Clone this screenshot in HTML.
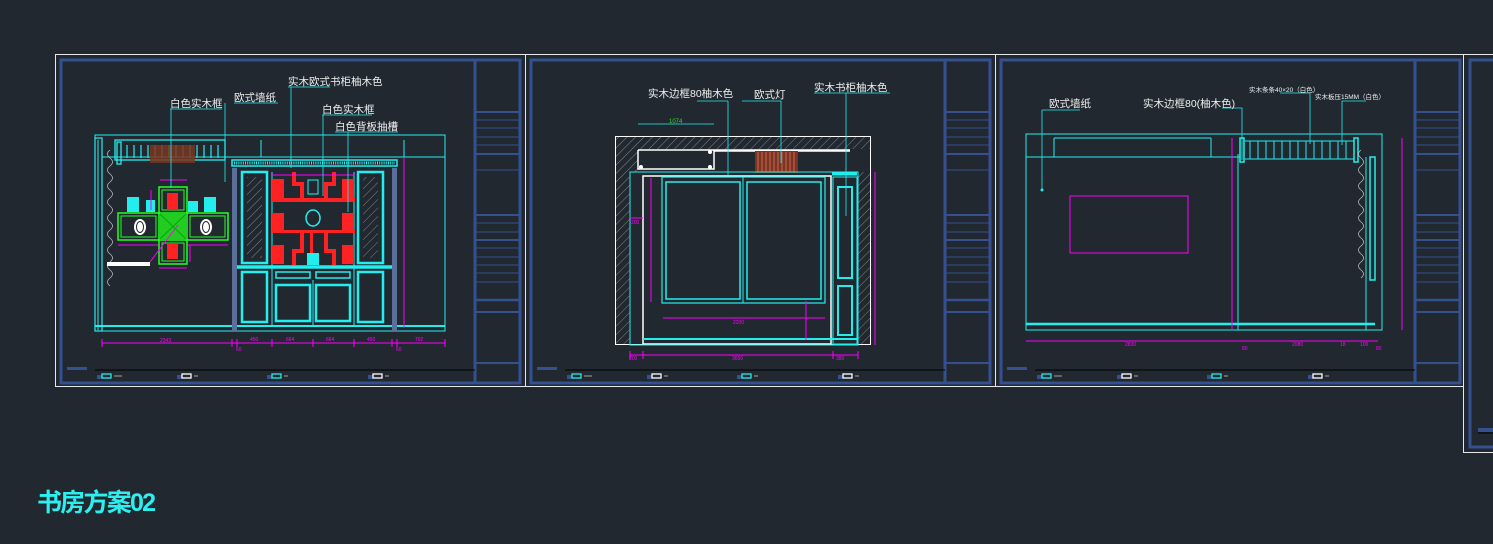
<!DOCTYPE html>
<html><head><meta charset="utf-8"><style>
html,body{margin:0;padding:0;background:#212830;width:1493px;height:544px;overflow:hidden}
svg{display:block}
text{font-family:"Liberation Sans","Noto Sans CJK SC",sans-serif}
</style></head><body>
<svg width="1493" height="544" viewBox="0 0 1493 544" xmlns="http://www.w3.org/2000/svg">
<defs>
<pattern id="hatch" width="6" height="6" patternUnits="userSpaceOnUse" patternTransform="rotate(45)">
<line x1="0" y1="0" x2="0" y2="6" stroke="#9a9a9a" stroke-width="0.8"/></pattern>
<g id="frame">
 <rect x="6" y="6" width="459" height="323" fill="none" stroke="#34508f" stroke-width="3"/>
 <line x1="420" y1="6" x2="420" y2="329" stroke="#34508f" stroke-width="3"/>
 <g stroke="#34508f">
  <line x1="420" y1="58" x2="465" y2="58" stroke-width="2"/>
  <line x1="420" y1="66" x2="465" y2="66"/><line x1="420" y1="74" x2="465" y2="74"/>
  <line x1="420" y1="83" x2="465" y2="83"/><line x1="420" y1="91" x2="465" y2="91"/>
  <line x1="420" y1="100" x2="465" y2="100" stroke-width="2"/>
  <line x1="420" y1="116" x2="465" y2="116"/>
  <line x1="420" y1="161" x2="465" y2="161" stroke-width="2"/>
  <line x1="420" y1="169" x2="465" y2="169"/><line x1="420" y1="178" x2="465" y2="178"/>
  <line x1="420" y1="186" x2="465" y2="186" stroke-width="2"/>
  <line x1="420" y1="194" x2="465" y2="194"/><line x1="420" y1="203" x2="465" y2="203"/>
  <line x1="420" y1="211" x2="465" y2="211"/><line x1="420" y1="219" x2="465" y2="219"/>
  <line x1="420" y1="228" x2="465" y2="228"/>
  <line x1="420" y1="246" x2="465" y2="246" stroke-width="2.5"/>
  <line x1="420" y1="258" x2="465" y2="258" stroke-width="2"/>
  <line x1="420" y1="309" x2="465" y2="309" stroke-width="2"/>
 </g>
 <line x1="40" y1="316" x2="420" y2="316" stroke="#000" stroke-width="1"/>
 <rect x="12" y="313" width="20" height="3" fill="#34508f"/>
 <g>
  <rect x="42" y="321" width="5" height="4" fill="#34508f"/><rect x="47" y="320" width="9" height="4" fill="none" stroke="#2ee" stroke-width="1.3"/><rect x="59" y="321" width="8" height="2" fill="#666"/>
  <rect x="122" y="321" width="5" height="4" fill="#34508f"/><rect x="127" y="320" width="9" height="4" fill="none" stroke="#fff" stroke-width="1.3"/><rect x="139" y="321" width="4" height="2" fill="#666"/>
  <rect x="212" y="321" width="5" height="4" fill="#34508f"/><rect x="217" y="320" width="9" height="4" fill="none" stroke="#2ee" stroke-width="1.3"/><rect x="229" y="321" width="4" height="2" fill="#666"/>
  <rect x="313" y="321" width="5" height="4" fill="#34508f"/><rect x="318" y="320" width="9" height="4" fill="none" stroke="#fff" stroke-width="1.3"/><rect x="330" y="321" width="4" height="2" fill="#666"/>
 </g>
</g>
</defs>

<rect x="55.5" y="54.5" width="470" height="332" fill="none" stroke="#e8e8e8" stroke-width="1"/>
<rect x="525.5" y="54.5" width="470" height="332" fill="none" stroke="#e8e8e8" stroke-width="1"/>
<rect x="995.5" y="54.5" width="468" height="332" fill="none" stroke="#e8e8e8" stroke-width="1"/>
<rect x="1463.5" y="54.5" width="40" height="398" fill="none" stroke="#e8e8e8" stroke-width="1"/>
<use href="#frame" x="55" y="54"/>
<use href="#frame" x="525" y="54"/>
<use href="#frame" x="995" y="54"/>
<rect x="1470" y="60" width="40" height="387" fill="none" stroke="#34508f" stroke-width="3"/>
<rect x="1478" y="428" width="20" height="4" fill="#34508f"/>
<line x1="1478" y1="433" x2="1493" y2="433" stroke="#000"/>

<!-- PANEL 1 -->
<g fill="none" stroke="#2ee" stroke-width="1">
 <rect x="95" y="135" width="350" height="196"/>
 <line x1="102" y1="157" x2="445" y2="157"/>
 <line x1="95" y1="326" x2="445" y2="326" stroke-width="2"/>
 <rect x="95" y="138" width="7" height="193" stroke-width="1.2"/>
 <line x1="98" y1="140" x2="98" y2="330"/>
 <rect x="115" y="140" width="110" height="20" stroke-width="1.3"/>
 <rect x="117" y="142" width="4" height="22" stroke-width="1.3"/>
 <path d="M261 140 V157 H267 M404 140 V157 H410"/>
</g>
<g stroke="#2ee" stroke-width="1.2">
 <line x1="127" y1="145" x2="127" y2="158"/><line x1="134" y1="145" x2="134" y2="158"/><line x1="141" y1="145" x2="141" y2="158"/>
 <line x1="148" y1="145" x2="148" y2="158"/><line x1="155" y1="145" x2="155" y2="158"/><line x1="162" y1="145" x2="162" y2="158"/>
 <line x1="169" y1="145" x2="169" y2="158"/><line x1="176" y1="145" x2="176" y2="158"/><line x1="183" y1="145" x2="183" y2="158"/>
 <line x1="190" y1="145" x2="190" y2="158"/><line x1="197" y1="145" x2="197" y2="158"/><line x1="204" y1="145" x2="204" y2="158"/>
 <line x1="211" y1="145" x2="211" y2="158"/><line x1="218" y1="145" x2="218" y2="158"/>
</g>
<rect x="150" y="145" width="45" height="18" fill="#7a3520" opacity="0.85"/>
<path d="M110 150 q-5 4 0 8 q5 4 0 8 q-5 4 0 8 q5 4 0 8 q-5 4 0 8 q5 4 0 8 q-5 4 0 8 q5 4 0 8 q-5 4 0 8 q5 4 0 8 q-5 4 0 8 q5 4 0 8 q-5 4 0 8 q5 4 0 8 q-5 4 0 8 q5 4 0 8 q-5 4 0 8" fill="none" stroke="#bbb" stroke-width="0.8"/>
<g fill="none" stroke="#2f2" stroke-width="1.5">
 <rect x="159" y="187" width="28" height="26"/><rect x="159" y="240" width="28" height="24"/>
 <rect x="118" y="213" width="41" height="27"/><rect x="187" y="213" width="41" height="27"/>
 <rect x="162" y="190" width="22" height="20" stroke-width="1"/><rect x="162" y="243" width="22" height="18" stroke-width="1"/>
 <rect x="121" y="216" width="35" height="21" stroke-width="1"/><rect x="190" y="216" width="35" height="21" stroke-width="1"/>
</g>
<rect x="160" y="214" width="26" height="25" fill="#2c2"/>
<path d="M160 214 L186 239 M186 214 L160 239" stroke="#0a0" stroke-width="1"/>
<rect x="167" y="193" width="11" height="16" fill="#f22"/><rect x="167" y="243" width="11" height="16" fill="#f22"/>
<ellipse cx="140" cy="227" rx="6" ry="8" fill="#fff"/><ellipse cx="140" cy="227" rx="3.5" ry="5.5" fill="none" stroke="#222"/>
<ellipse cx="206" cy="227" rx="6" ry="8" fill="#fff"/><ellipse cx="206" cy="227" rx="3.5" ry="5.5" fill="none" stroke="#222"/>
<g fill="#2ee"><rect x="127" y="197" width="12" height="15"/><rect x="146" y="200" width="9" height="12"/><rect x="188" y="201" width="10" height="11"/><rect x="204" y="197" width="12" height="15"/></g>
<rect x="107" y="262" width="43" height="4" fill="#fff"/>
<g stroke="#f0f" stroke-width="1" fill="none">
 <line x1="160" y1="180" x2="187" y2="180"/><line x1="118" y1="245" x2="158" y2="245"/><line x1="188" y1="245" x2="228" y2="245"/>
 <line x1="159" y1="268" x2="187" y2="268"/><line x1="151" y1="190" x2="151" y2="210"/><line x1="190" y1="245" x2="190" y2="262"/>
 <line x1="150" y1="262" x2="178" y2="225"/>
</g>
<g fill="none" stroke="#2ee">
 <rect x="232" y="160" width="165" height="6" stroke-width="1.5"/>
 <line x1="234" y1="163" x2="395" y2="163" stroke="#2ee" stroke-width="3" stroke-dasharray="1 1.2"/>
 <rect x="242" y="172" width="25" height="91" stroke-width="2.5"/>
 <rect x="358" y="172" width="25" height="91" stroke-width="2.5"/>
 <line x1="237" y1="267" x2="393" y2="267" stroke-width="3.5"/>
 <rect x="242" y="272" width="25" height="50" stroke-width="2.5"/>
 <rect x="358" y="272" width="25" height="50" stroke-width="2.5"/>
 <rect x="276" y="272" width="34" height="6" stroke-width="1.5"/><rect x="316" y="272" width="34" height="6" stroke-width="1.5"/>
 <rect x="276" y="285" width="34" height="36" stroke-width="2.5"/><rect x="316" y="285" width="34" height="36" stroke-width="2.5"/>
 <line x1="237" y1="326" x2="393" y2="326" stroke-width="2"/>
 <line x1="272" y1="172" x2="272" y2="325"/><line x1="354" y1="172" x2="354" y2="325"/><line x1="313" y1="280" x2="313" y2="325"/>
</g>
<rect x="247" y="177" width="15" height="81" fill="url(#hatch)"/>
<rect x="363" y="177" width="15" height="81" fill="url(#hatch)"/>
<rect x="232" y="168" width="5" height="163" fill="#5a6f99"/><rect x="392" y="168" width="5" height="163" fill="#5a6f99"/>
<g fill="#f22">
 <rect x="272" y="179" width="12" height="19"/><rect x="342" y="179" width="12" height="19"/>
 <rect x="272" y="213" width="12" height="19"/><rect x="342" y="213" width="12" height="19"/>
 <rect x="272" y="245" width="12" height="19"/><rect x="342" y="245" width="12" height="19"/>
 <rect x="272" y="198" width="83" height="4"/><rect x="272" y="230" width="83" height="3"/>
 <path d="M292 172 h4 v10 h8 v16 h-4 v-12 h-8z M332 172 h4 v14 h-8 v12 h-4 v-16 h8z"/>
 <path d="M292 265 h4 v-12 h8 v-20 h-4 v16 h-8z M332 265 h4 v-16 h-8 v-16 h-4 v20 h8z"/>
 <rect x="310" y="230" width="3" height="35"/>
</g>
<g fill="#2ee"><path d="M308 180 h10 v14 h-10z" fill="none" stroke="#2ee"/><ellipse cx="313" cy="218" rx="7" ry="8" fill="none" stroke="#2ee" stroke-width="1.5"/><rect x="307" y="253" width="12" height="12"/></g>
<g stroke="#f0f" stroke-width="1" fill="none">
 <line x1="272" y1="175" x2="355" y2="175"/><line x1="404" y1="158" x2="404" y2="328"/>
 <line x1="102" y1="343" x2="445" y2="343"/>
 <line x1="102" y1="339" x2="102" y2="347"/><line x1="232" y1="339" x2="232" y2="347"/><line x1="237" y1="339" x2="237" y2="347"/>
 <line x1="272" y1="339" x2="272" y2="347"/><line x1="313" y1="339" x2="313" y2="347"/><line x1="354" y1="339" x2="354" y2="347"/>
 <line x1="392" y1="339" x2="392" y2="347"/><line x1="397" y1="339" x2="397" y2="347"/><line x1="445" y1="339" x2="445" y2="347"/>
</g>
<g fill="#f0f" font-size="5"><text x="160" y="342">2343</text><text x="236" y="351">60</text><text x="250" y="341">450</text><text x="286" y="341">664</text><text x="326" y="341">664</text><text x="367" y="341">450</text><text x="396" y="351">60</text><text x="415" y="341">702</text></g>
<g stroke="#2ee" stroke-width="0.8" fill="none">
 <path d="M170 109 H222 M171 109 V188"/>
 <path d="M234 103 H278 M225 103 V182"/>
 <path d="M288 87 H330 M291 87 V168"/>
 <path d="M322 115 H372 M323 115 V196"/>
 <path d="M335 132 H398 M348 132 V212"/>
</g>
<g fill="#eee" font-size="10.5">
 <text x="170" y="107">白色实木框</text>
 <text x="234" y="101">欧式墙纸</text>
 <text x="288" y="85">实木欧式书柜柚木色</text>
 <text x="322" y="113">白色实木框</text>
 <text x="335" y="130">白色背板抽槽</text>
</g>

<!-- PANEL 2 -->
<rect x="615" y="136" width="256" height="209" fill="url(#hatch)"/>
<rect x="630" y="172" width="228" height="173" fill="#212830"/>
<rect x="638" y="149" width="233" height="23" fill="#212830"/>
<rect x="615.5" y="136.5" width="255" height="208" fill="none" stroke="#fff" stroke-width="1"/>
<g fill="none" stroke="#fff" stroke-width="1.5">
 <path d="M638 150 H850 M638 150 V169 H714 V151 H850"/>
 <rect x="643" y="176" width="188" height="168"/>
</g>
<g fill="#fff"><circle cx="710" cy="152" r="2"/><circle cx="641" cy="167" r="2"/><circle cx="710" cy="167" r="2"/></g>
<rect x="755" y="151" width="43" height="22" fill="#7a3520"/>
<g stroke="#c65" stroke-width="1"><line x1="758" y1="152" x2="758" y2="172"/><line x1="762" y1="152" x2="762" y2="172"/><line x1="766" y1="152" x2="766" y2="172"/><line x1="770" y1="152" x2="770" y2="172"/><line x1="774" y1="152" x2="774" y2="172"/><line x1="778" y1="152" x2="778" y2="172"/><line x1="782" y1="152" x2="782" y2="172"/><line x1="786" y1="152" x2="786" y2="172"/><line x1="790" y1="152" x2="790" y2="172"/><line x1="794" y1="152" x2="794" y2="172"/></g>
<g fill="none" stroke="#2ee">
 <rect x="630" y="172" width="228" height="173" stroke-width="1"/>
 <rect x="662" y="177" width="163" height="126" stroke-width="1.2"/>
 <rect x="666" y="182" width="74" height="117" stroke-width="1.5"/>
 <rect x="747" y="182" width="74" height="117" stroke-width="1.5"/>
 <line x1="743" y1="177" x2="743" y2="303"/>
 <line x1="643" y1="339" x2="857" y2="339" stroke-width="2"/>
 <line x1="832" y1="174" x2="857" y2="174" stroke-width="3"/>
 <rect x="833" y="177" width="24" height="167"/>
 <rect x="838" y="187" width="14" height="91" stroke-width="2"/>
 <rect x="838" y="286" width="14" height="49" stroke-width="2"/>
</g>
<g stroke="#f0f" stroke-width="1" fill="none">
 <line x1="651" y1="178" x2="651" y2="302"/><line x1="663" y1="318" x2="825" y2="318"/><line x1="806" y1="301" x2="806" y2="340"/>
 <line x1="875" y1="172" x2="875" y2="345"/><line x1="630" y1="355" x2="858" y2="355"/>
 <line x1="630" y1="351" x2="630" y2="359"/><line x1="643" y1="351" x2="643" y2="359"/><line x1="833" y1="351" x2="833" y2="359"/><line x1="858" y1="351" x2="858" y2="359"/>
 <line x1="630" y1="218" x2="643" y2="218"/>
</g>
<line x1="638" y1="124" x2="714" y2="124" stroke="#2ee" stroke-width="0.8"/>
<g fill="#f0f" font-size="5"><text x="733" y="324">2200</text><text x="732" y="360">3650</text><text x="836" y="360">380</text><text x="629" y="360">200</text><text x="631" y="224">200</text></g>
<text x="669" y="123" fill="#3d3" font-size="6">1074</text>
<g stroke="#2ee" stroke-width="0.8" fill="none">
 <path d="M697 101 H728 M728 101 V175"/>
 <path d="M742 101 H781 M781 101 V163"/>
 <path d="M814 93 H890 M846 93 V216"/>
</g>
<g fill="#eee" font-size="10.5">
 <text x="648" y="97">实木边框80柚木色</text>
 <text x="754" y="98">欧式灯</text>
 <text x="814" y="91">实木书柜柚木色</text>
</g>

<!-- PANEL 3 -->
<g fill="none" stroke="#2ee" stroke-width="1">
 <rect x="1026" y="134" width="356" height="196"/>
 <line x1="1026" y1="157" x2="1240" y2="157"/>
 <path d="M1054 138 V157 H1062 M1211 138 V157 H1203 M1054 138 H1211"/>
 <line x1="1238" y1="154" x2="1238" y2="330"/>
 <line x1="1026" y1="324" x2="1375" y2="324" stroke-width="2.5"/>
 <rect x="1240" y="138" width="4" height="24" stroke-width="1.5"/>
 <rect x="1354" y="138" width="4" height="24" stroke-width="1.5"/>
 <line x1="1245" y1="141" x2="1354" y2="141"/>
 <line x1="1366" y1="157" x2="1366" y2="330"/>
 <rect x="1370" y="157" width="5" height="123" stroke-width="1.5"/>
</g>
<g stroke="#2ee" stroke-width="1"><line x1="1250" y1="141" x2="1250" y2="159"/><line x1="1258" y1="141" x2="1258" y2="159"/><line x1="1266" y1="141" x2="1266" y2="159"/><line x1="1274" y1="141" x2="1274" y2="159"/><line x1="1282" y1="141" x2="1282" y2="159"/><line x1="1290" y1="141" x2="1290" y2="159"/><line x1="1298" y1="141" x2="1298" y2="159"/><line x1="1306" y1="141" x2="1306" y2="159"/><line x1="1314" y1="141" x2="1314" y2="159"/><line x1="1322" y1="141" x2="1322" y2="159"/><line x1="1330" y1="141" x2="1330" y2="159"/><line x1="1338" y1="141" x2="1338" y2="159"/><line x1="1346" y1="141" x2="1346" y2="159"/><line x1="1245" y1="159" x2="1354" y2="159"/></g>
<path d="M1361 150 q-5 4 0 8 q5 4 0 8 q-5 4 0 8 q5 4 0 8 q-5 4 0 8 q5 4 0 8 q-5 4 0 8 q5 4 0 8 q-5 4 0 8 q5 4 0 8 q-5 4 0 8 q5 4 0 8 q-5 4 0 8 q5 4 0 8 q-5 4 0 8 q5 4 0 8" fill="none" stroke="#bbb" stroke-width="0.8"/>
<rect x="1070" y="196" width="118" height="57" fill="none" stroke="#f0f" stroke-width="1"/>
<g stroke="#f0f" stroke-width="1" fill="none">
 <line x1="1232" y1="138" x2="1232" y2="330"/><line x1="1402" y1="138" x2="1402" y2="330"/>
 <line x1="1026" y1="341" x2="1378" y2="341"/>
</g>
<g fill="#f0f" font-size="5"><text x="1125" y="346">2830</text><text x="1242" y="350">80</text><text x="1292" y="346">2080</text><text x="1340" y="346">18</text><text x="1360" y="346">100</text><text x="1376" y="350">80</text></g>
<g stroke="#2ee" stroke-width="0.8" fill="none">
 <path d="M1042 110 H1080 M1042 110 V190"/>
 <path d="M1222 108 H1242 V160"/>
 <path d="M1280 93 H1310 V144"/>
 <path d="M1342 101 H1366 M1342 101 V145"/>
</g>
<circle cx="1042" cy="190" r="1.5" fill="#2ee"/>
<g fill="#eee">
 <text x="1049" y="107" font-size="10.5">欧式墙纸</text>
 <text x="1143" y="107" font-size="10.5">实木边框80(柚木色)</text>
 <text x="1249" y="92" font-size="6.5">实木条条40×20（白色）</text>
 <text x="1315" y="99" font-size="6.5">实木板压15MM（白色）</text>
</g>

<text x="37" y="511" fill="#2cf0f0" font-size="25" font-weight="bold" font-family="'Noto Sans CJK SC','Liberation Sans',sans-serif" textLength="119">书房方案02</text>
</svg>
</body></html>
